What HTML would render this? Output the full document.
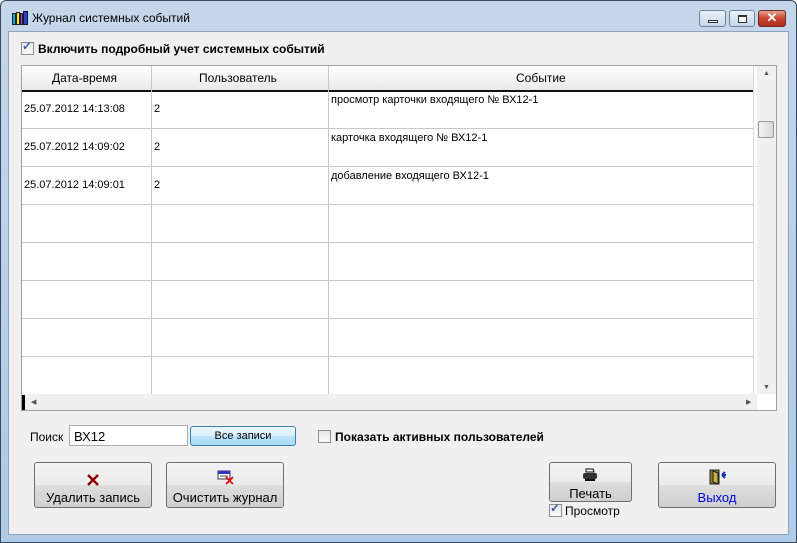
<!DOCTYPE html>
<html><head><meta charset="utf-8"><style>
*{box-sizing:border-box;margin:0;padding:0}
body{width:797px;height:543px;overflow:hidden;background:#fff;font-family:"Liberation Sans",Arial,sans-serif;position:relative}
.a{position:absolute}
.win{left:0;top:0;width:797px;height:543px;background:linear-gradient(#c4d6ea,#aecbe8);border:1px solid #3a4a5c;border-radius:6px 6px 0 0}
.client{left:8px;top:31px;width:781px;height:504px;background:#f0f0f0;border:1px solid #8ca3bb}
.t{font-size:12px;color:#000;white-space:nowrap}
.cb{width:13px;height:13px;border:1px solid #8e8f8f;background:linear-gradient(#e6e6e6,#fafafa)}
.btn{border:1px solid #707070;border-radius:3px;background:linear-gradient(#f2f2f2 0,#ebebeb 50%,#dddddd 51%,#cfcfcf 100%);text-align:center;font-size:13px}
.vl{width:1px;background:#c8c8c8}
.hl{height:1px;background:#c8c8c8}
</style></head><body>
<div class="a win"></div>
<!-- title icon -->
<svg class="a" style="left:11px;top:10px" width="18" height="16" viewBox="0 0 18 16">
<rect x="1" y="3" width="4" height="12" fill="#222"/><rect x="2" y="4" width="2" height="10" fill="#0ad"/>
<rect x="5" y="2" width="4" height="13" fill="#222"/><rect x="6" y="3" width="2" height="11" fill="#ee2"/>
<rect x="9" y="3" width="3" height="12" fill="#222"/><rect x="10" y="4" width="1" height="10" fill="#c3c"/>
<rect x="12" y="1" width="5" height="14" fill="#113"/><rect x="13" y="2" width="3" height="12" fill="#24c"/>
</svg>
<div class="a t" style="left:32px;top:11px;font-size:12px">Журнал системных событий</div>
<!-- caption buttons -->
<div class="a" style="left:699px;top:10px;width:27px;height:17px;border:1px solid #6d84a0;border-radius:3px;background:linear-gradient(#eaf1f8,#c6d6e8)"><div class="a" style="left:8px;top:9px;width:10px;height:3px;border:1px solid #333;background:#fff"></div></div>
<div class="a" style="left:729px;top:10px;width:26px;height:17px;border:1px solid #6d84a0;border-radius:3px;background:linear-gradient(#eaf1f8,#c6d6e8)"><div class="a" style="left:8px;top:4px;width:9px;height:8px;border:1px solid #333;border-top-width:2px;background:#fff"></div></div>
<div class="a" style="left:758px;top:10px;width:28px;height:17px;border:1px solid #6b2a22;border-radius:3px;background:linear-gradient(#e8a090,#c8442f 50%,#b22d1c)"><div class="a" style="left:0;top:-1px;width:26px;text-align:center;color:#fff;font-weight:bold;font-size:13px">✕</div></div>
<div class="a client"></div>
<!-- checkbox top -->
<div class="a cb" style="left:21px;top:42px"></div><div class="a" style="left:22px;top:39px;font-size:12px;color:#3a5fa8;font-weight:bold">✓</div>
<div class="a t" style="left:38px;top:42px;font-weight:bold">Включить подробный учет системных событий</div>
<!-- table -->
<div class="a" style="left:21px;top:65px;width:756px;height:346px;border:1px solid #a0a0a0;background:#fff"></div>
<div class="a" style="left:22px;top:66px;width:731px;height:24px;background:linear-gradient(#fff,#f4f4f4 50%,#e9e9e9)"></div>
<div class="a" style="left:22px;top:90px;width:731px;height:2px;background:#111"></div>
<div class="a t" style="left:52px;top:71px">Дата-время</div>
<div class="a t" style="left:199px;top:71px">Пользователь</div>
<div class="a t" style="left:516px;top:71px">Событие</div>
<div class="a vl" style="left:151px;top:66px;height:328px"></div>
<div class="a vl" style="left:328px;top:66px;height:328px"></div>
<div class="a vl" style="left:753px;top:66px;height:328px;background:#ddd"></div>
<div class="a hl" style="left:22px;top:128px;width:731px"></div>
<div class="a hl" style="left:22px;top:166px;width:731px"></div>
<div class="a hl" style="left:22px;top:204px;width:731px"></div>
<div class="a hl" style="left:22px;top:242px;width:731px"></div>
<div class="a hl" style="left:22px;top:280px;width:731px"></div>
<div class="a hl" style="left:22px;top:318px;width:731px"></div>
<div class="a hl" style="left:22px;top:356px;width:731px"></div>
<div class="a t" style="left:24px;top:103px;font-size:11px">25.07.2012 14:13:08</div>
<div class="a t" style="left:154px;top:103px;font-size:11px">2</div>
<div class="a t" style="left:331px;top:94px;font-size:11px">просмотр карточки входящего № ВХ12-1</div>
<div class="a t" style="left:24px;top:141px;font-size:11px">25.07.2012 14:09:02</div>
<div class="a t" style="left:154px;top:141px;font-size:11px">2</div>
<div class="a t" style="left:331px;top:132px;font-size:11px">карточка входящего № ВХ12-1</div>
<div class="a t" style="left:24px;top:179px;font-size:11px">25.07.2012 14:09:01</div>
<div class="a t" style="left:154px;top:179px;font-size:11px">2</div>
<div class="a t" style="left:331px;top:170px;font-size:11px">добавление входящего ВХ12-1</div>
<!-- v scrollbar -->
<div class="a" style="left:757px;top:66px;width:19px;height:328px;background:#f0f0f0"></div>
<div class="a" style="left:763px;top:70px;font-size:7px;color:#555">▲</div>
<div class="a" style="left:763px;top:384px;font-size:7px;color:#555">▼</div>
<div class="a" style="left:758px;top:121px;width:16px;height:17px;border:1px solid #979797;border-radius:2px;background:linear-gradient(90deg,#f3f3f3,#d8d8d8)"></div>
<!-- h scrollbar -->
<div class="a" style="left:22px;top:394px;width:735px;height:16px;background:#f0f0f0"></div>
<div class="a" style="left:22px;top:395px;width:3px;height:15px;background:#000"></div>
<div class="a" style="left:31px;top:398px;font-size:7px;color:#555">◀</div>
<div class="a" style="left:746px;top:398px;font-size:7px;color:#555">▶</div>
<!-- search -->
<div class="a t" style="left:30px;top:430px;font-size:12px">Поиск</div>
<div class="a" style="left:69px;top:425px;width:119px;height:21px;border:1px solid #abadb3;background:#fff"></div>
<div class="a t" style="left:74px;top:429px;font-size:13px">ВХ12</div>
<div class="a" style="left:190px;top:426px;width:106px;height:20px;border:1px solid #3c7fb1;border-radius:3px;background:linear-gradient(#eaf6fd,#d9f0fc 50%,#bee6fd 51%,#a7d9f5)"></div>
<div class="a t" style="left:190px;top:430px;width:106px;text-align:center;font-size:11px">Все записи</div>
<div class="a cb" style="left:318px;top:430px"></div>
<div class="a t" style="left:335px;top:430px;font-weight:bold">Показать активных пользователей</div>
<!-- buttons -->
<div class="a btn" style="left:34px;top:462px;width:118px;height:46px"><svg class="a" style="left:52px;top:11px" width="12" height="12" viewBox="0 0 12 12"><path d="M1 1L11 11M11 1L1 11" stroke="#8b0000" stroke-width="2.4"/></svg><div class="a" style="left:0;top:27px;width:116px">Удалить запись</div></div>
<div class="a btn" style="left:166px;top:462px;width:118px;height:46px"><svg class="a" style="left:50px;top:6px" width="18" height="16" viewBox="0 0 18 16"><rect x="1" y="2" width="12" height="8" fill="#fff" stroke="#333"/><rect x="1" y="2" width="12" height="3" fill="#33c"/><path d="M3 7h8" stroke="#555"/><path d="M9 8L16 15M16 8L9 15" stroke="#e00" stroke-width="1.6"/></svg><div class="a" style="left:0;top:27px;width:116px">Очистить журнал</div></div>
<div class="a btn" style="left:549px;top:462px;width:83px;height:40px"><svg class="a" style="left:32px;top:5px" width="16" height="14" viewBox="0 0 16 14"><path d="M4 1h7l1 3H4z" fill="#fff" stroke="#000"/><rect x="1" y="5" width="14" height="6" rx="2" fill="#333"/><rect x="3" y="11" width="10" height="2" fill="#000"/></svg><div class="a" style="left:0;top:23px;width:81px">Печать</div></div>
<div class="a cb" style="left:549px;top:504px"></div><div class="a" style="left:550px;top:501px;font-size:12px;color:#3a5fa8;font-weight:bold">✓</div>
<div class="a t" style="left:565px;top:504px;font-size:12px">Просмотр</div>
<div class="a btn" style="left:658px;top:462px;width:118px;height:46px"><svg class="a" style="left:50px;top:6px" width="18" height="16" viewBox="0 0 18 16"><rect x="1" y="1" width="9" height="14" fill="#8a7a2a" stroke="#222"/><path d="M4 2l5 2v11l-5-2z" fill="#c8b040" stroke="#222"/><path d="M17 6h-4M13 6l3-3M13 6l3 3" stroke="#1530b0" stroke-width="2"/></svg><div class="a" style="left:0;top:27px;width:116px;color:#0000e0">Выход</div></div>
</body></html>
